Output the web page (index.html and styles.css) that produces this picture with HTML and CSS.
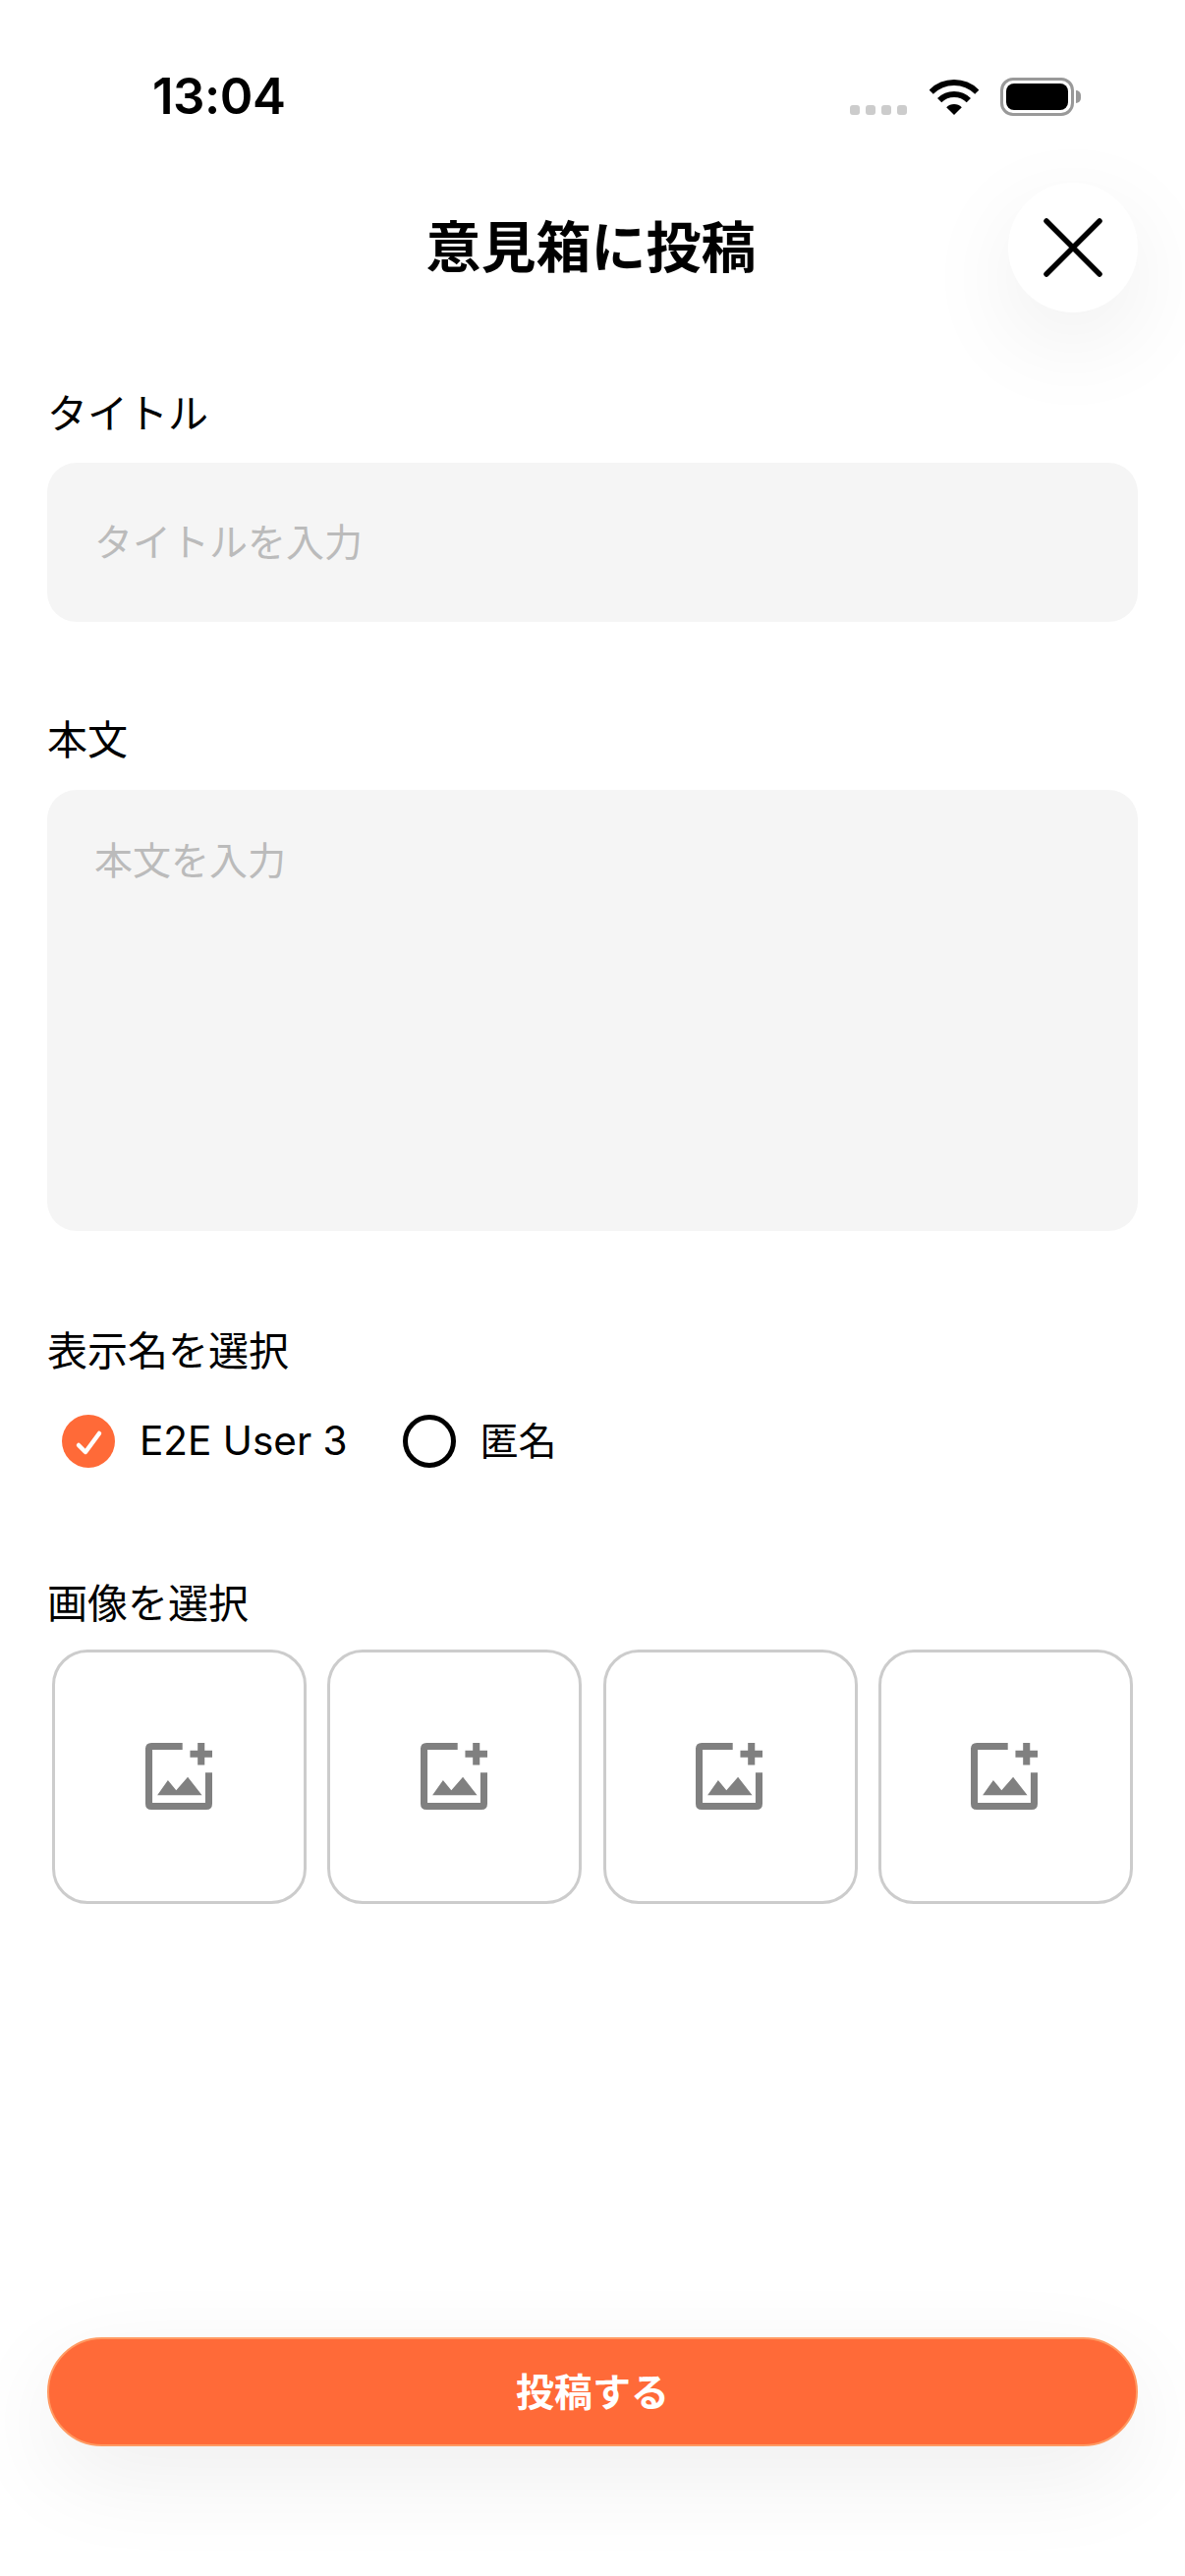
FILE: index.html
```html
<!DOCTYPE html>
<html lang="ja">
<head>
<meta charset="utf-8">
<title>意見箱に投稿</title>
<link rel="stylesheet" href="styles.css">
</head>
<body>
<div class="page">
  <div class="status">
    <div class="time">13:04</div>
    <div class="status-icons">
      <div class="signal"><span></span><span></span><span></span><span></span></div>
      <svg class="wifi" viewBox="0 0 50 38"><path d="M1.7 13.7A33 33 0 0 1 48.3 13.7" fill="none" stroke="#000" stroke-width="6"/><path d="M10.15 22.15A21 21 0 0 1 39.85 22.15" fill="none" stroke="#000" stroke-width="6"/><path d="M25 37L17.2 29.2A11 11 0 0 1 32.8 29.2Z" fill="#000"/></svg>
      <div class="battery"><div class="battery-fill"></div></div>
      <div class="battery-nub"></div>
    </div>
  </div>
  <header class="header">
    <h1 class="title">意見箱に投稿</h1>
    <button class="close" type="button" aria-label="閉じる">
      <svg viewBox="0 0 60 60" class="close-icon"><path d="M3 3L57 57M57 3L3 57" stroke="#000" stroke-width="5.5" stroke-linecap="round" fill="none"/></svg>
    </button>
  </header>
  <main class="form">
    <section class="field field-title">
      <div class="label">タイトル</div>
      <input class="input" type="text" placeholder="タイトルを入力">
    </section>
    <section class="field field-body">
      <div class="label">本文</div>
      <textarea class="textarea" placeholder="本文を入力"></textarea>
    </section>
    <section class="field field-name">
      <div class="label">表示名を選択</div>
      <div class="radios">
        <div class="radio">
          <span class="radio-mark radio-on"><svg viewBox="0 0 54 54" class="check"><path d="M17 31L24 38L38 19" fill="none" stroke="#fff" stroke-width="4.5" stroke-linecap="round" stroke-linejoin="round"/></svg></span>
          <span class="radio-text">E2E User 3</span>
        </div>
        <div class="radio">
          <span class="radio-mark radio-off"></span>
          <span class="radio-text radio-text-ja">匿名</span>
        </div>
      </div>
    </section>
    <section class="field field-images">
      <div class="label">画像を選択</div>
      <div class="tiles">
        <div class="tile"><svg class="tile-icon" viewBox="0 0 202 202"><path d="M112 0H18Q0 0 0 18V184Q0 202 18 202H184Q202 202 202 184V90H181V181H21V21H112Z"/><path d="M158 0H179V23H202V44H179V67H158V44H135V23H158Z"/><path d="M36 158L68 113L93 143L128 103L171 158Z"/></svg></div>
        <div class="tile"><svg class="tile-icon" viewBox="0 0 202 202"><path d="M112 0H18Q0 0 0 18V184Q0 202 18 202H184Q202 202 202 184V90H181V181H21V21H112Z"/><path d="M158 0H179V23H202V44H179V67H158V44H135V23H158Z"/><path d="M36 158L68 113L93 143L128 103L171 158Z"/></svg></div>
        <div class="tile"><svg class="tile-icon" viewBox="0 0 202 202"><path d="M112 0H18Q0 0 0 18V184Q0 202 18 202H184Q202 202 202 184V90H181V181H21V21H112Z"/><path d="M158 0H179V23H202V44H179V67H158V44H135V23H158Z"/><path d="M36 158L68 113L93 143L128 103L171 158Z"/></svg></div>
        <div class="tile"><svg class="tile-icon" viewBox="0 0 202 202"><path d="M112 0H18Q0 0 0 18V184Q0 202 18 202H184Q202 202 202 184V90H181V181H21V21H112Z"/><path d="M158 0H179V23H202V44H179V67H158V44H135V23H158Z"/><path d="M36 158L68 113L93 143L128 103L171 158Z"/></svg></div>
      </div>
    </section>
  </main>
  <footer class="footer">
    <button class="submit" type="button">投稿する</button>
  </footer>
</div>
</body>
</html>
```
FILE: styles.css
```css
* { box-sizing: border-box; }
html, body { margin: 0; padding: 0; background: #fff; }
body {
  font-family: Inter, "Noto Sans CJK JP", sans-serif;
  color: #000;
  overflow: hidden;
}
.page {
  width: 1206px;
  height: 2622px;
  display: flex;
  flex-direction: column;
  overflow: hidden;
}
.status {
  height: 186px;
  padding: 72px 106px 0 155px;
  display: flex;
  justify-content: space-between;
  align-items: flex-start;
  flex: none;
}
.time {
  font-size: 51px;
  font-weight: 600;
  line-height: 52px;
  letter-spacing: -0.5px;
}
.status-icons {
  display: flex;
  align-items: flex-end;
  height: 40px;
  margin-top: 6px;
}
.signal { display: flex; gap: 6px; margin-right: 23px; padding-bottom: 1px; }
.signal span { width: 10px; height: 10px; border-radius: 3px; background: #ccc; }
.wifi { width: 50px; height: 38px; margin-right: 22px; display: block; }
.battery {
  width: 75px;
  height: 39px;
  border: 3px solid #999;
  border-radius: 13px;
  padding: 3px;
}
.battery-fill { width: 100%; height: 100%; background: #000; border-radius: 8px; }
.battery-nub {
  width: 5px;
  height: 13px;
  margin: 0 0 13px 2px;
  background: #999;
  border-radius: 0 5px 5px 0;
}
.header {
  position: relative;
  height: 132px;
  flex: none;
  display: flex;
  align-items: center;
  justify-content: center;
}
.title { margin: 0 3px 0 0; font-size: 56px; font-weight: 700; line-height: 132px; }
.close {
  position: absolute;
  top: 0;
  right: 48px;
  width: 132px;
  height: 132px;
  padding: 0;
  border: 0;
  border-radius: 50%;
  background: #fff;
  box-shadow: 0 30px 100px rgba(0, 0, 0, 0.07);
  display: flex;
  align-items: center;
  justify-content: center;
}
.close-icon { width: 60px; height: 60px; display: block; }
.form { padding: 0 48px; flex: none; }
.field { display: block; }
.field-title { margin-top: 72px; }
.field-body { margin-top: 89px; }
.field-name { margin-top: 91px; }
.field-images { margin-top: 107px; }
.label { font-size: 41px; line-height: 62px; }
.input, .textarea {
  display: block;
  width: 100%;
  border: 0;
  outline: 0;
  border-radius: 30px;
  background: #f5f5f5;
  font-family: inherit;
  font-size: 39px;
  color: #000;
  padding: 0 48px;
  resize: none;
}
.input { height: 162px; margin-top: 19px; padding-bottom: 1px; }
.textarea { height: 449px; margin-top: 20px; padding-top: 44px; line-height: 56px; }
.input::placeholder, .textarea::placeholder { color: #bbb; opacity: 1; }
.radios { display: flex; gap: 56px; margin-top: 34px; padding-left: 15px; }
.radio { display: flex; align-items: center; gap: 25px; height: 54px; }
.radio-mark { width: 54px; height: 54px; border-radius: 50%; display: block; flex: none; }
.radio-on { background: #ff6a38; }
.radio-off { border: 5px solid #000; }
.check { width: 54px; height: 54px; display: block; }
.radio-text { font-size: 40.5px; line-height: 54px; }
.radio-text-ja { font-size: 39px; }
.tiles { display: flex; justify-content: space-between; padding: 0 5px; margin-top: 16px; }
.tile {
  width: 259px;
  height: 259px;
  padding: 0 2px 2px 0;
  border: 3px solid #ccc;
  border-radius: 36px;
  background: #fff;
  display: flex;
  align-items: center;
  justify-content: center;
}
.tile-icon { width: 68px; height: 68px; fill: #808080; display: block; }
.footer { margin-top: auto; padding: 0 48px 132px; }
.submit {
  display: block;
  width: 100%;
  height: 111px;
  border: 2px solid #ff9a62;
  border-radius: 56px;
  background: #ff6a38;
  color: #fff;
  font-family: inherit;
  font-size: 39px;
  font-weight: 700;
  padding: 0 0 5px;
  box-shadow: 0 30px 100px rgba(0, 0, 0, 0.07);
}
```
